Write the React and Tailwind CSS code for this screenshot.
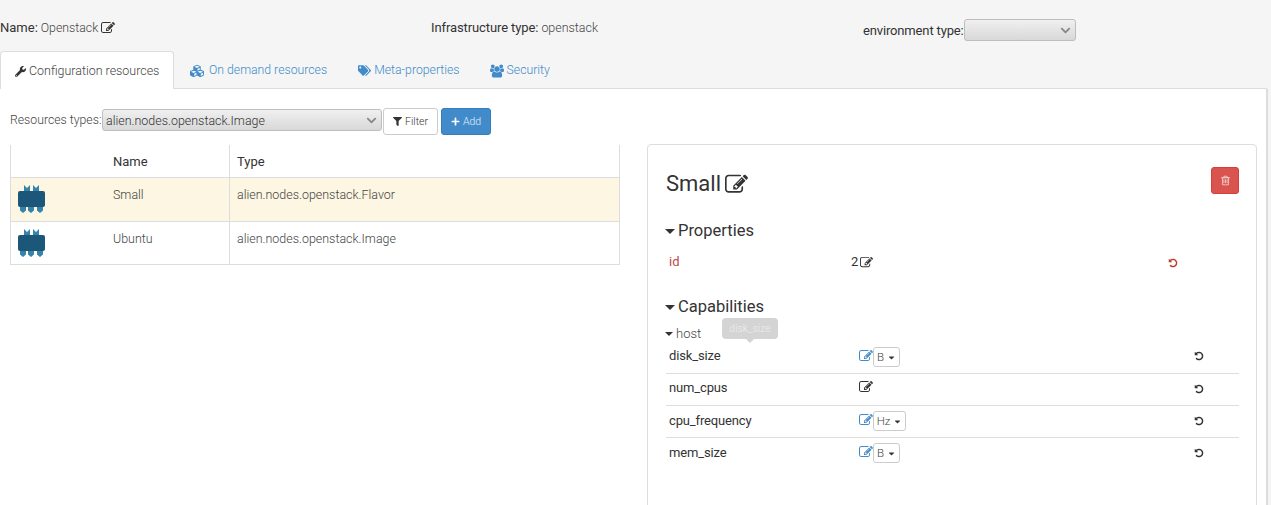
import React from "react";
import { FaWrench, FaCubes, FaTags, FaFilter, FaPlus, FaCaretDown, FaChevronDown } from "react-icons/fa";

const EDIT = "M888 1184l116-116-152-152-116 116v56h96v96h56zm440-720q-16-16-33 1l-350 350q-17 17-1 33t33-1l350-350q17-17 1-33zm80 594v190q0 119-84.5 203.5t-203.5 84.5h-832q-119 0-203.5-84.5t-84.5-203.5v-832q0-119 84.5-203.5t203.5-84.5h832q63 0 117 25 15 7 18 23 3 17-9 29l-49 49q-14 14-32 8-23-6-45-6h-832q-66 0-113 47t-47 113v832q0 66 47 113t113 47h832q66 0 113-47t47-113v-126q0-13 9-22l64-64q15-15 35-7t20 29zm-96-738l288 288-672 672h-288v-288zm444 132l-92 92-288-288 92-92q28-28 68-28t68 28l152 152q28 28 28 68t-28 68z";
const UNDO = "M1664 896q0 156-61 298t-164 245-245 164-298 61q-172 0-327-72.5t-264-204.5q-7-10-6.5-22.5t8.5-20.5l137-138q10-9 25-9 16 2 23 12 73 95 179 147t225 52q104 0 198.5-40.5t163.5-109.5 109.5-163.5 40.5-198.5-40.5-198.5-109.5-163.5-163.5-109.5-198.5-40.5q-98 0-188 35.5t-160 101.5l137 138q31 30 14 69-17 40-59 40h-448q-26 0-45-19t-19-45v-448q0-42 40-59 39-17 69 14l130 129q107-101 244.5-156.5t284.5-55.5q156 0 298 61t245 164 164 245 61 298z";
const TRASH = "M704 736v576q0 14-9 23t-23 9h-64q-14 0-23-9t-9-23v-576q0-14 9-23t23-9h64q14 0 23 9t9 23zm256 0v576q0 14-9 23t-23 9h-64q-14 0-23-9t-9-23v-576q0-14 9-23t23-9h64q14 0 23 9t9 23zm256 0v576q0 14-9 23t-23 9h-64q-14 0-23-9t-9-23v-576q0-14 9-23t23-9h64q14 0 23 9t9 23zm128 724v-948h-896v948q0 22 7 40.5t14.5 27 10.5 8.5h832q3 0 10.5-8.5t14.5-27 7-40.5zm-672-1076h448l-48-117q-7-9-17-11h-317q-10 2-17 11zm928 32v64q0 14-9 23t-23 9h-96v948q0 83-47 143.5t-113 60.5h-832q-66 0-113-58.5t-47-141.5v-952h-96q-14 0-23-9t-9-23v-64q0-14 9-23t23-9h309l70-167q15-37 54-63t79-26h320q40 0 79 26t54 63l70 167h309q14 0 23 9t9 23z";
const USERS = "M593 896q-162 5-265 128h-134q-82 0-138-40.5t-56-118.5q0-353 124-353 6 0 43.5 21t97.5 42.5 119 21.5q67 0 133-23-5 37-5 66 0 139 81 256zm1071 637q0 120-73 189.5t-194 69.5h-874q-121 0-194-69.5t-73-189.5q0-53 3.5-103.5t14-109 26.5-108.5 43-97.5 62-81 85.5-53.5 111.5-20q10 0 43 21.5t73 48 107 48 135 21.5 135-21.5 107-48 73-48 43-21.5q61 0 111.5 20t85.5 53.5 62 81 43 97.5 26.5 108.5 14 109 3.5 103.5zm-1024-1277q0 106-75 181t-181 75-181-75-75-181 75-181 181-75 181 75 75 181zm704 384q0 159-112.5 271.5t-271.5 112.5-271.5-112.5-112.5-271.5 112.5-271.5 271.5-112.5 271.5 112.5 112.5 271.5zm576 225q0 78-56 118.5t-138 40.5h-134q-103-123-265-128 81-117 81-256 0-29-5-66 66 23 133 23 59 0 119-21.5t97.5-42.5 43.5-21q124 0 124 353zm-128-609q0 106-75 181t-181 75-181-75-75-181 75-181 181-75 181 75 75 181z";

function Fa({ d, size, className = "", vb = "0 0 1792 1792" }) {
  return (
    <svg width={size} height={size} viewBox={vb} fill="currentColor" className={`shrink-0 ${className}`}>
      <path d={d} />
    </svg>
  );
}

function NodeIcon() {
  return (
    <svg width="28" height="30" viewBox="0 0 28 30" className="block">
      <path d="M6 1l3 3 3-3v6h-6zM15 1l3 3 3-3v6h-6z" fill="#3583ab" />
      <rect x="0" y="7" width="27" height="16" rx="2" fill="#1c5779" />
      <path d="M2 23h6v3.500l-3 2.500-3-2.500zM10 23h6v3.500l-3 2.500-3-2.500zM19 23h6v3.500l-3 2.500-3-2.500z" fill="#3583ab" />
    </svg>
  );
}

function FakeSelect({ w, children }) {
  return (
    <div className={`${w} h-[22px] flex items-center justify-between pl-[3px] pr-[4px] rounded-[3px] border border-[#bdbdbd] bg-gradient-to-b from-[#f0f0f0] to-[#d8d8d8] font-light text-[12.45px] text-[#333]`}>
      <span className="mt-[2px]">{children}</span>
      <FaChevronDown className="text-[11px] text-[#888]" />
    </div>
  );
}

function UnitBtn({ children, w }) {
  return (
    <div className={`${w} h-[20px] flex items-center justify-center gap-[3px] border border-[#ccc] rounded-[3px] bg-white text-[11.5px] font-light text-[#444]`}>
      <span className="mt-[2px]">{children}</span>
      <FaCaretDown className="text-[9px] text-[#333]" />
    </div>
  );
}

function CapRow({ name, unit, unitW, border = true, h = "h-[32px]", pt = "pt-[6px]", valuePt = "pt-[5px]" }) {
  return (
    <div className={`${h} flex ${border ? "border-b border-[#ddd]" : ""}`}>
      <div className={`w-[190px] pl-[3px] ${pt} leading-[18px] tracking-[-0.15px]`}>{name}</div>
      <div className={`w-[329px] flex items-start pl-[3px] ${valuePt}`}>
        <Fa d={EDIT} size={14} className={unit ? "mt-[2px] text-[#428bca]" : "mt-[1px] text-[#333]"} />
        {unit && <UnitBtn w={unitW}>{unit}</UnitBtn>}
      </div>
      <div className="pt-[10px] pl-[9px]">
        <Fa d={UNDO} size={10} className="text-[#333]" />
      </div>
    </div>
  );
}

function Row({ name, type, selected, h = "h-[44px]" }) {
  return (
    <div className={`flex ${h} border-b border-[#ddd] ${selected ? "bg-[#fcf6e2]" : "bg-white"}`}>
      <div className="w-[94px] pl-[7px] pt-[6px]"><NodeIcon /></div>
      <div className="w-[125px] border-r border-[#ddd] pl-[8px] pt-[8px] leading-[18px] font-light text-[12.45px] text-[#444]">{name}</div>
      <div className="flex-1 pl-[7px] pt-[8px] leading-[18px] font-light text-[12.45px] text-[#444]">{type}</div>
    </div>
  );
}

function Caret({ className = "" }) {
  return <span className={`inline-block w-0 h-0 border-x-[5px] border-x-transparent border-t-[5px] border-t-[#333] ${className}`} />;
}

export default function App() {
  return (
    <div className="w-[1271px] h-[505px] overflow-hidden bg-[#f5f5f5] text-[13px] text-[#333] font-['Roboto',sans-serif]">
      <div className="h-[51px] grid grid-cols-[431px_432px_1fr]">
        <div className="pt-[19px] leading-[18px] flex items-start">
          <span>Name:</span><span className="font-light text-[12.3px] ml-[3px] text-[#444]">Openstack</span>
          <Fa d={EDIT} size={14} className="ml-[3px] mt-[2px]" />
        </div>
        <div className="pt-[19px] leading-[18px] flex items-start">
          <span className="tracking-[-0.1px]">Infrastructure type:</span><span className="font-light text-[12.45px] ml-[3px] text-[#444]">openstack</span>
        </div>
        <div className="pt-[19px] flex items-start">
          <span className="leading-[22px] mt-[1px] tracking-[-0.15px]">environment type:</span>
          <FakeSelect w="w-[112px]" />
        </div>
      </div>

      <div className="flex h-[38px] w-[1267px] border-b border-[#ddd] font-light text-[12.25px]">
        <div className="h-[38px] w-[174px] flex items-center gap-[3px] pl-[14px] pt-[1px] bg-white border border-b-0 border-[#ddd] rounded-t-[4px] text-[12.45px] text-[#444]">
          <FaWrench className="text-[11px] text-[#333]" /> Configuration resources
        </div>
        <div className="h-[37px] flex items-center gap-[5px] pl-[16px] pr-[15px] pt-[2px] text-[#428bca]">
          <FaCubes className="text-[14px]" /> On demand resources
        </div>
        <div className="h-[37px] flex items-center gap-[3px] pl-[16px] pr-[15px] pt-[2px] text-[#428bca]">
          <FaTags className="text-[13px]" /> Meta-properties
        </div>
        <div className="h-[37px] flex items-center gap-[3px] pl-[15px] pt-[2px] text-[#428bca]">
          <Fa d={USERS} size={14} vb="0 0 1920 1792" /> Security
        </div>
      </div>

      <div className="w-[1268px] h-[416px] bg-white border-r-2 border-[#ddd] pl-[10px]">
        <div className="h-[56px] flex items-start pt-[18px]">
          <span className="w-[92px] leading-[25px] mt-[1px] font-light text-[12.25px] whitespace-nowrap text-[#444]">Resources types:</span>
          <div className="mt-[2px]"><FakeSelect w="w-[280px]">alien.nodes.openstack.Image</FakeSelect></div>
          <div className="h-[27px] w-[55px] ml-[1px] mt-[1px] flex items-center justify-center gap-[3px] border border-[#ccc] rounded-[3px] bg-white text-[10.5px] font-light">
            <FaFilter className="text-[9px] text-[#333]" /> Filter
          </div>
          <div className="h-[27px] w-[50px] ml-[3px] mt-[1px] flex items-center justify-center gap-[3px] rounded-[3px] bg-[#428bca] border border-[#357ebd] text-[10.5px] font-light text-[#e6f0f8]">
            <FaPlus className="text-[9px] text-white" /> Add
          </div>
        </div>

        <div className="flex items-start">
          <div className="w-[610px] border-l border-r border-[#ddd]">
            <div className="flex h-[33px] border-b border-[#ddd]">
              <div className="w-[94px]" />
              <div className="w-[125px] border-r border-[#ddd] pl-[8px] pt-[8px] leading-[18px]">Name</div>
              <div className="pl-[7px] pt-[8px] leading-[18px]">Type</div>
            </div>
            <Row name="Small" type="alien.nodes.openstack.Flavor" selected />
            <Row name="Ubuntu" type="alien.nodes.openstack.Image" h="h-[43px]" />
          </div>

          <div className="w-[610px] h-[365px] ml-[27px] -mt-[1px] bg-white border border-[#ddd] rounded-[4px] pl-[18px] pr-[17px] relative">
            <div className="flex justify-between pt-[22px] h-[66px]">
              <div className="text-[22px] leading-[32px] flex items-center gap-[4px] mt-[1px] h-[32px]">
                Small <Fa d={EDIT} size={23} />
              </div>
              <div className="w-[28px] h-[27px] flex items-center justify-center rounded-[3px] bg-[#d9534f] border border-[#d43f3a]">
                <Fa d={TRASH} size={11} className="text-[#f6dcdb]" />
              </div>
            </div>

            <div className="flex items-center gap-[3px] text-[16.5px] leading-[20px] -ml-[1px] mt-[10px]">
              <Caret /> Properties
            </div>
            <div className="flex h-[32px] mt-[6px] pt-[6px] leading-[18px]">
              <div className="w-[185px] pl-[3px] text-[#b94a48]">id</div>
              <div className="w-[314px] flex items-center h-[18px] gap-[2px]">2 <Fa d={EDIT} size={13} /></div>
              <Fa d={UNDO} size={10} className="text-[#c0392b] mt-[5px] ml-[3px]" />
            </div>

            <div className="flex items-center gap-[3px] text-[16.5px] leading-[20px] -ml-[1px] mt-[18px]">
              <Caret /> Capabilities
            </div>
            <div className="flex items-center gap-[3px] leading-[18px] font-light text-[#444] -ml-[1px] mt-[8px] h-[18px]">
              <Caret className="!border-x-[4px] !border-t-[4px]" /> host
            </div>
            <div className="-mt-[2px]">
              <CapRow name="disk_size" unit="B" unitW="w-[27px]" h="h-[33px]" valuePt="pt-[6px]" />
              <CapRow name="num_cpus" pt="pt-[5px]" />
              <CapRow name="cpu_frequency" unit="Hz" unitW="w-[33px]" />
              <CapRow name="mem_size" unit="B" unitW="w-[27px]" border={false} />
            </div>

            <div className="absolute left-[74px] top-[173px] w-[56px] h-[21px] rounded-[4px] bg-[#d4d4d4] flex items-center justify-center text-[10.5px] font-light text-[#eeeeee]">
              disk_size
              <div className="absolute left-[24px] top-[21px] w-0 h-0 border-x-[4px] border-x-transparent border-t-[4px] border-t-[#d4d4d4]" />
            </div>
          </div>
        </div>
      </div>
    </div>
  );
}
